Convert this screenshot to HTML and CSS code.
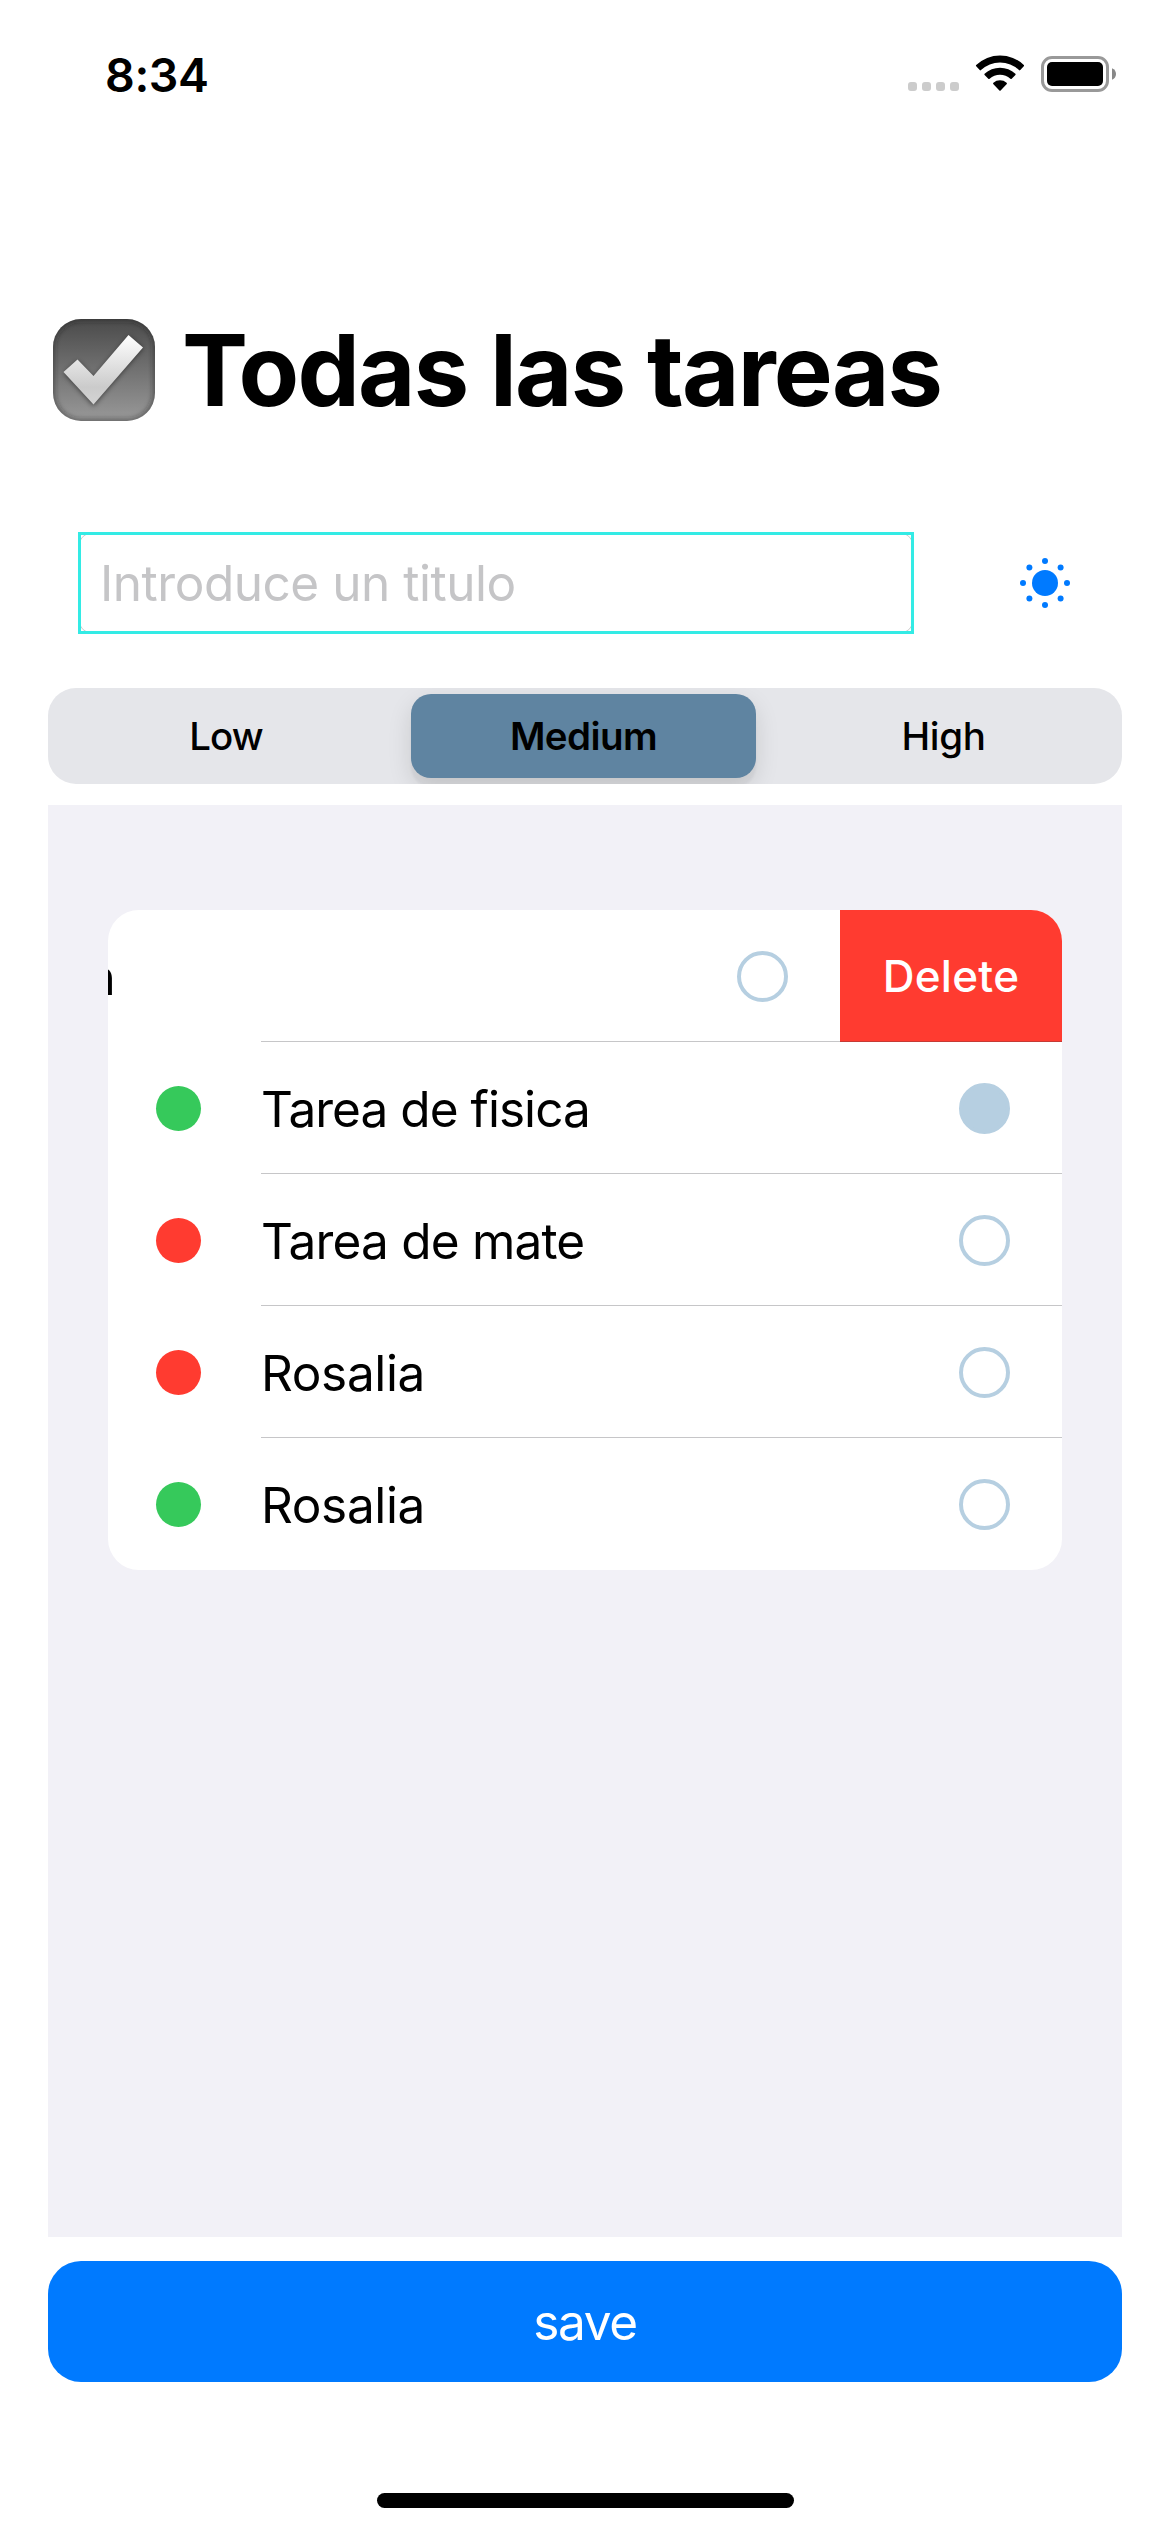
FILE: index.html
```html
<!DOCTYPE html>
<html lang="es">
<head>
<meta charset="utf-8">
<title>Todas las tareas</title>
<link rel="stylesheet" href="styles.css">
</head>
<body>
<div class="screen">
  <header class="status">
    <span class="time">8:34</span>
    <svg class="signal" width="51" height="9" viewBox="0 0 51 9"><g fill="#ccc"><rect width="9" height="9" rx="3"/><rect x="14" width="9" height="9" rx="3"/><rect x="28" width="9" height="9" rx="3"/><rect x="42" width="9" height="9" rx="3"/></g></svg>
    <svg class="wifi" width="50" height="37" viewBox="0 0 50 37"><path d="M1.2 11.2Q0.6 10.6 1.2 10A34.3 34.3 0 0 1 48.8 10Q49.4 10.6 48.8 11.2L45.3 15.1Q44.7 15.7 44 15.1A27.5 27.5 0 0 0 6 15.1Q5.3 15.7 4.7 15.1Z"/><path d="M9.6 20Q9 19.4 9.6 18.8A22.5 22.5 0 0 1 40.4 18.8Q41 19.4 40.4 20L36.7 23.8Q36.1 24.4 35.4 23.8A15.5 15.5 0 0 0 14.6 23.8Q13.9 24.4 13.3 23.8Z"/><path d="M18.2 28.9Q17.8 28.2 18.4 27.7A10.2 10.2 0 0 1 31.6 27.7Q32.2 28.2 31.8 28.9L25.6 35.5Q25 36.1 24.4 35.5Z"/></svg>
    <svg class="battery" width="75" height="36" viewBox="0 0 75 36"><rect x="1.5" y="1.5" width="65" height="33" rx="9.5" fill="none" stroke="#999" stroke-width="3"/><rect x="6" y="6" width="56" height="24" rx="5"/><path d="M71 12.2Q75 14 75 18T71 23.8Z" fill="#888"/></svg>
  </header>

  <h1 class="title">
    <svg class="check" width="102" height="102" viewBox="0 0 102 102">
      <defs>
        <linearGradient id="tile" x2="0" y2="1"><stop offset="0" stop-color="#4a4a4a"/><stop offset="1" stop-color="#999"/></linearGradient>
        <linearGradient id="tick" x2="0" y2="1"><stop offset="0" stop-color="#fff"/><stop offset=".75" stop-color="#cbcbcb"/><stop offset="1" stop-color="#d4d4d4"/></linearGradient>
        <filter id="soft" x="-20%" y="-20%" width="140%" height="140%"><feGaussianBlur stdDeviation="2.5"/></filter>
        <clipPath id="edge"><rect width="102" height="102" rx="28"/></clipPath>
      </defs>
      <g clip-path="url(#edge)">
        <rect width="102" height="102" fill="url(#tile)"/>
        <rect width="102" height="102" rx="28" fill="none" stroke="#222" stroke-opacity=".55" stroke-width="4" filter="url(#soft)"/>
      </g>
      <path d="M11 54.5L24.5 42L40.500 58.500L76 17.500L90 29L40.500 87Z" fill="#000" opacity=".5" filter="url(#soft)"/>
      <path d="M10.500 53L24.500 40.500L40.500 57L75.500 16L90 28.500L40.500 85.500Z" fill="url(#tick)"/>
    </svg>
    <span>Todas las tareas</span>
  </h1>

  <div class="entry">
    <div class="field"><span>Introduce un titulo</span></div>
    <svg width="50" height="50" viewBox="-25 -25 50 50" fill="#007aff"><circle r="13"/><circle cy="-22" r="3"/><circle cy="22" r="3"/><circle cx="-22" r="3"/><circle cx="22" r="3"/><circle cx="-15.600" cy="-15.600" r="3"/><circle cx="15.600" cy="-15.600" r="3"/><circle cx="-15.600" cy="15.600" r="3"/><circle cx="15.600" cy="15.600" r="3"/></svg>
  </div>

  <div class="segments">
    <span class="segment low">Low</span>
    <span class="segment selected">Medium</span>
    <span class="segment high">High</span>
  </div>

  <main class="list">
    <div class="card">
      <div class="row swiped">
        <div class="content"><span class="name">n</span><i class="ring"></i></div>
        <div class="delete">Delete</div>
      </div>
      <div class="row"><i class="dot green"></i><span class="name fisica">Tarea de fisica</span><i class="ring done"></i></div>
      <div class="row"><i class="dot red"></i><span class="name mate">Tarea de mate</span><i class="ring"></i></div>
      <div class="row"><i class="dot red"></i><span class="name">Rosalia</span><i class="ring"></i></div>
      <div class="row"><i class="dot green"></i><span class="name">Rosalia</span><i class="ring"></i></div>
    </div>
  </main>

  <div class="save">save</div>
  <div class="home"></div>
</div>
</body>
</html>
```
FILE: styles.css
```css
* { box-sizing: border-box; }

body {
  margin: 0;
  background: #fff;
  color: #000;
  font-family: Inter, "Liberation Sans", sans-serif;
}

.screen {
  display: flex;
  flex-direction: column;
  width: 1170px;
  height: 2532px;
  padding: 0 48px;
  overflow: hidden;
}

.status {
  display: flex;
  height: 149px;
  padding-left: 57px;
  align-items: center;
}

.time {
  flex: 1;
  font-size: 46.5px;
  font-weight: 600;
  letter-spacing: -0.39px;
}

.signal { margin: 24px 16px 0 0; }
.wifi { margin: -3px 16px 0 0; }
.battery { margin: -1px 6px 0 0; }

.title {
  display: flex;
  align-items: center;
  gap: 27px;
  height: 102px;
  margin: 170px 0 0 5px;
  font-size: 99px;
  line-height: 102px;
  font-weight: 700;
  letter-spacing: -1.8px;
  word-spacing: 1px;
  white-space: nowrap;
}

.check { flex: none; }

.entry {
  display: flex;
  justify-content: space-between;
  align-items: center;
  height: 102px;
  margin: 111px 52px 0 30px;
}

.field {
  position: relative;
  width: 836px;
  height: 102px;
  padding: 0 0 0 21px;
  border: 1px solid #ccc;
  border-radius: 15px;
  color: #c5c5c7;
  font-size: 49.5px;
  line-height: 101px;
  letter-spacing: -0.47px;
}

.field::after {
  content: "";
  position: absolute;
  inset: -1px;
  border: 3px solid #33ebe5;
}

.segments {
  display: flex;
  justify-content: space-between;
  align-items: center;
  height: 96px;
  margin-top: 54px;
  border-radius: 28px;
  overflow: hidden;
  background: #e5e6ea;
}

.segment {
  width: 345px;
  height: 84px;
  font-size: 38.5px;
  line-height: 84px;
  font-weight: 500;
  text-align: center;
}

.low { padding-left: 11px; letter-spacing: -1px; }
.high { padding-right: 12px; letter-spacing: -0.31px; }

.selected {
  margin: 0 3px 0 0;
  border-radius: 20px;
  background: #5f84a1;
  box-shadow: 0 9px 24px rgba(0, 0, 0, 0.12), 0 9px 3px rgba(0, 0, 0, 0.04);
  font-weight: 600;
  letter-spacing: -0.59px;
}

.list {
  height: 1432px;
  margin-top: 21px;
  padding: 105px 60px 0;
  background: #f2f1f7;
}

.card {
  border-radius: 31px;
  overflow: hidden;
  background: #fff;
}

.row {
  position: relative;
  display: flex;
  align-items: center;
  height: 132px;
  padding: 0 52px 0 48px;
}

.row:not(:last-child)::after {
  content: "";
  position: absolute;
  left: 153px;
  right: 0;
  bottom: 0;
  height: 1px;
  background: rgba(60, 60, 67, 0.29);
}

.dot {
  width: 45px;
  height: 45px;
  margin: 1px 60px 0 0;
  border-radius: 50%;
}

.green { background: #36c95b; }
.red { background: #ff3b30; }

.name {
  flex: 1;
  padding-top: 2px;
  font-size: 49.5px;
  line-height: 60px;
  letter-spacing: -0.35px;
}

.fisica { letter-spacing: -0.95px; }
.mate { letter-spacing: -0.8px; }

.ring {
  width: 51px;
  height: 51px;
  margin-top: 1px;
  border: 4px solid #b6cfe1;
  border-radius: 50%;
}

.done { background: #b6cfe1; }

.swiped { padding: 0; }

.content {
  display: flex;
  align-items: center;
  width: 732px;
  padding-right: 52px;
}

.content .name { margin-left: -21.5px; }

.delete {
  width: 222px;
  height: 132px;
  background: #ff3b30;
  color: #fff;
  font-size: 44px;
  line-height: 132px;
  font-weight: 500;
  letter-spacing: 0.28px;
  text-align: center;
}

.save {
  height: 121px;
  margin-top: 24px;
  border-radius: 33px;
  background: #007aff;
  color: #fff;
  font-size: 49.5px;
  line-height: 122px;
  letter-spacing: -1.35px;
  text-align: center;
}

.home {
  width: 417px;
  height: 15px;
  margin: 111px auto 0;
  border-radius: 8px;
  background: #000;
}
```
